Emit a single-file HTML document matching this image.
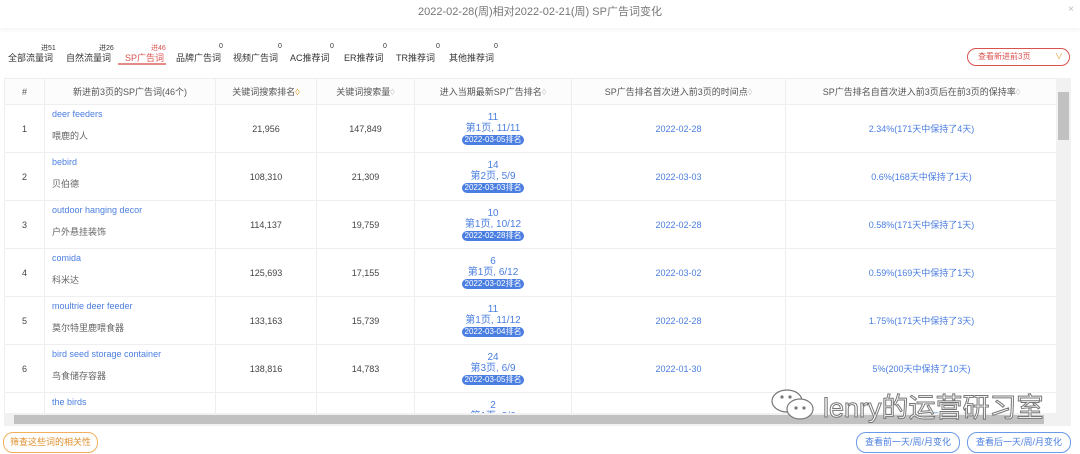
<!DOCTYPE html>
<html><head><meta charset="utf-8"><style>
*{margin:0;padding:0;box-sizing:border-box}
body{width:1080px;height:454px;overflow:hidden;background:#fff;font-family:"Liberation Sans","Noto Sans CJK SC",sans-serif;position:relative;color:#555}
.a{position:absolute}
.title{top:5px;left:0;width:1080px;text-align:center;font-size:11px;color:#777;line-height:14px}
.hdr{top:0;left:0;width:1080px;height:28px;box-shadow:0 2px 4px rgba(0,0,0,.05)}
.tab{top:51px;font-size:9px;color:#333;white-space:nowrap}
.sup{top:43px;font-size:7px;color:#333}
table{position:absolute;left:4px;top:78px;border-collapse:collapse;table-layout:fixed;font-size:9px}
td,th{border:1px solid #eee;text-align:center;overflow:hidden}
th{height:26px;font-weight:normal;color:#555;background:#fcfcfc}
td{height:48px;color:#444}
.kw{text-align:left;padding-left:7px}
.kw b{display:block;font-weight:normal;color:#4a7ee0;margin-top:-6px}
.kw i{display:block;font-style:normal;color:#666;margin-top:10px}
.bl{color:#4a7ee0}
.bd{display:inline-block;background:#4a7ee0;color:#fff;border-radius:6px;padding:0 3px;font-size:8px;line-height:10px}
.n{line-height:11px;color:#4a7ee0;font-size:10px}
.btn{border-radius:10px;font-size:9px;text-align:center}
.wm{font-size:27px;color:#fff;-webkit-text-stroke:1px #777;white-space:nowrap}
</style></head><body>
<div class="a hdr"></div>
<div class="a title">2022-02-28(周)相对2022-02-21(周) SP广告词变化</div>
<div class="a" style="top:4px;right:6px;font-size:10px;color:#bbb">×</div>

<div class="a tab" style="left:8px">全部流量词</div><div class="a sup" style="left:41px">进51</div>
<div class="a tab" style="left:66px">自然流量词</div><div class="a sup" style="left:99px">进26</div>
<div class="a tab" style="left:125px;color:#d9534f">SP广告词</div><div class="a sup" style="left:151px;color:#d9534f">进46</div>
<div class="a" style="left:118px;top:63px;width:48px;height:2px;background:#e28b88"></div>
<div class="a tab" style="left:176px">品牌广告词</div><div class="a sup" style="left:219px">0</div>
<div class="a tab" style="left:233px">视频广告词</div><div class="a sup" style="left:278px">0</div>
<div class="a tab" style="left:290px">AC推荐词</div><div class="a sup" style="left:330px">0</div>
<div class="a tab" style="left:344px">ER推荐词</div><div class="a sup" style="left:383px">0</div>
<div class="a tab" style="left:396px">TR推荐词</div><div class="a sup" style="left:436px">0</div>
<div class="a tab" style="left:449px">其他推荐词</div><div class="a sup" style="left:494px">0</div>

<div class="a btn" style="left:967px;top:48px;width:103px;height:18px;border:1px solid #d9534f;color:#d9534f;line-height:16px;text-align:left;padding-left:10px;font-size:8px">查看新进前3页<span style="position:absolute;right:6px;color:#e0a030">∨</span></div>

<table>
<colgroup><col style="width:40px"><col style="width:171px"><col style="width:101px"><col style="width:98px"><col style="width:157px"><col style="width:214px"><col style="width:272px"></colgroup>
<tr><th>#</th><th>新进前3页的SP广告词(46个)</th><th>关键词搜索排名<span style="color:#e0a030">◊</span></th><th>关键词搜索量<span style="color:#ccc">◊</span></th><th>进入当期最新SP广告排名<span style="color:#ccc">◊</span></th><th>SP广告排名首次进入前3页的时间点<span style="color:#ccc">◊</span></th><th>SP广告排名自首次进入前3页后在前3页的保持率<span style="color:#ccc">◊</span></th></tr>
<tr><td>1</td><td class="kw"><b>deer feeders</b><i>喂鹿的人</i></td><td>21,956</td><td>147,849</td><td><div class="n">11<br>第1页, 11/11</div><span class="bd">2022-03-05排名</span></td><td class="bl">2022-02-28</td><td class="bl">2.34%(171天中保持了4天)</td></tr>
<tr><td>2</td><td class="kw"><b>bebird</b><i>贝伯德</i></td><td>108,310</td><td>21,309</td><td><div class="n">14<br>第2页, 5/9</div><span class="bd">2022-03-03排名</span></td><td class="bl">2022-03-03</td><td class="bl">0.6%(168天中保持了1天)</td></tr>
<tr><td>3</td><td class="kw"><b>outdoor hanging decor</b><i>户外悬挂装饰</i></td><td>114,137</td><td>19,759</td><td><div class="n">10<br>第1页, 10/12</div><span class="bd">2022-02-28排名</span></td><td class="bl">2022-02-28</td><td class="bl">0.58%(171天中保持了1天)</td></tr>
<tr><td>4</td><td class="kw"><b>comida</b><i>科米达</i></td><td>125,693</td><td>17,155</td><td><div class="n">6<br>第1页, 6/12</div><span class="bd">2022-03-02排名</span></td><td class="bl">2022-03-02</td><td class="bl">0.59%(169天中保持了1天)</td></tr>
<tr><td>5</td><td class="kw"><b>moultrie deer feeder</b><i>莫尔特里鹿喂食器</i></td><td>133,163</td><td>15,739</td><td><div class="n">11<br>第1页, 11/12</div><span class="bd">2022-03-04排名</span></td><td class="bl">2022-02-28</td><td class="bl">1.75%(171天中保持了3天)</td></tr>
<tr><td>6</td><td class="kw"><b>bird seed storage container</b><i>鸟食储存容器</i></td><td>138,816</td><td>14,783</td><td><div class="n">24<br>第3页, 6/9</div><span class="bd">2022-03-05排名</span></td><td class="bl">2022-01-30</td><td class="bl">5%(200天中保持了10天)</td></tr>
<tr><td>7</td><td class="kw"><b>the birds</b><i>鸟类</i></td><td>178,850</td><td>9,951</td><td><div class="n">2<br>第1页, 2/6</div><span class="bd">2022-03-01排名</span></td><td class="bl">2021-11-21</td><td class="bl">1.14%(264天中保持了3天)</td></tr>
</table>
<div class="a" style="left:0;top:413px;width:1080px;height:41px;background:#fff"></div>
<div class="a" style="left:4px;top:413px;width:1067px;height:13px;background:#f1f1f1"></div>
<div class="a" style="left:14px;top:415px;width:1030px;height:9px;background:#c1c1c1"></div>
<div class="a" style="left:1056px;top:78px;width:15px;height:335px;background:#f1f1f1"></div>
<div class="a" style="left:1058px;top:92px;width:11px;height:48px;background:#c1c1c1"></div>
<svg class="a" style="left:770px;top:388px" width="50" height="34" viewBox="0 0 50 34" fill="#fff" stroke="#777" stroke-width="1.2"><ellipse cx="17" cy="13" rx="15" ry="11"/><ellipse cx="30" cy="21" rx="13" ry="10"/><circle cx="26" cy="20" r="1" fill="#777"/><circle cx="34" cy="20" r="1" fill="#777"/><circle cx="12" cy="9" r="1" fill="#777"/><circle cx="20" cy="9" r="1" fill="#777"/></svg>
<div class="a wm" style="left:823px;top:386px">lenry的运营研习室</div>

<div class="a btn" style="left:3px;top:432px;width:95px;height:21px;border:1px solid #f0b060;color:#e09030;line-height:19px">筛查这些词的相关性</div>
<div class="a btn" style="left:856px;top:432px;width:104px;height:21px;border:1px solid #6a9ae8;color:#4a7ee0;line-height:19px">查看前一天/周/月变化</div>
<div class="a btn" style="left:967px;top:432px;width:104px;height:21px;border:1px solid #6a9ae8;color:#4a7ee0;line-height:19px">查看后一天/周/月变化</div>
</body></html>
